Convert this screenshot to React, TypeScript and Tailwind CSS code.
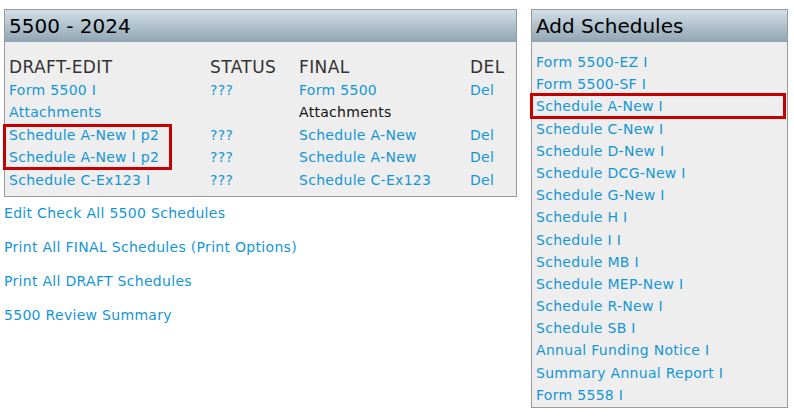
const font = "font-['DejaVu_Sans',Verdana,sans-serif]";

const rows = [
  { draft: "Form 5500 I", status: "???", final: "Form 5500", finalLink: true, del: "Del" },
  { draft: "Attachments", status: "", final: "Attachments", finalLink: false, del: "" },
  { draft: "Schedule A-New I p2", status: "???", final: "Schedule A-New", finalLink: true, del: "Del" },
  { draft: "Schedule A-New I p2", status: "???", final: "Schedule A-New", finalLink: true, del: "Del" },
  { draft: "Schedule C-Ex123 I", status: "???", final: "Schedule C-Ex123", finalLink: true, del: "Del" },
];

const schedules = [
  "Form 5500-EZ I",
  "Form 5500-SF I",
  "Schedule A-New I",
  "Schedule C-New I",
  "Schedule D-New I",
  "Schedule DCG-New I",
  "Schedule G-New I",
  "Schedule H I",
  "Schedule I I",
  "Schedule MB I",
  "Schedule MEP-New I",
  "Schedule R-New I",
  "Schedule SB I",
  "Annual Funding Notice I",
  "Summary Annual Report I",
  "Form 5558 I",
];

const actions = [
  "Edit Check All 5500 Schedules",
  "Print All FINAL Schedules (Print Options)",
  "Print All DRAFT Schedules",
  "5500 Review Summary",
];

const link = "text-[#1496d6] cursor-pointer";

function PanelHeader({ title }: { title: string }) {
  return (
    <div className="h-[32px] bg-gradient-to-b from-[#d3dfe7] to-[#8fa5b3] pl-[4px] text-[20px] tracking-normal leading-[32px] text-black">
      {title}
    </div>
  );
}

export default function App() {
  return (
    <div className={`${font} relative w-[794px] h-[416px] bg-white text-[14px] tracking-[0.3px]`}>
      <div className="flex pt-[9px] pl-[4px]">
        <div className="w-[513px]">
          <div className="border border-[#9a9a9a] bg-[#eeeeee]">
            <PanelHeader title="5500 - 2024" />
            <div className="pt-[13px] pb-[4px] pl-[4px]">
              <div className="grid grid-cols-[201px_89px_171px_auto] h-[24px] items-center text-[17px] tracking-[0.4px] text-[#333333]">
                <span>DRAFT-EDIT</span>
                <span>STATUS</span>
                <span>FINAL</span>
                <span>DEL</span>
              </div>
              {rows.map((r, i) => (
                <div key={i} className="grid grid-cols-[201px_89px_171px_auto] h-[22.5px] items-center">
                  <span className={link}>{r.draft}</span>
                  <span className={link}>{r.status}</span>
                  <span className={r.finalLink ? link : "text-[#111111]"}>{r.final}</span>
                  <span className={link}>{r.del}</span>
                </div>
              ))}
            </div>
          </div>
          <div className="flex flex-col -mt-[1px]">
            {actions.map((a) => (
              <div key={a} className={`h-[34px] leading-[34px] ${link}`}>
                {a}
              </div>
            ))}
          </div>
        </div>
        <div className="ml-[14px] w-[257px]">
          <div className="border border-[#9a9a9a] bg-[#eeeeee]">
            <PanelHeader title="Add Schedules" />
            <div className="pt-[9px] pb-[1px] pl-[4px]">
              {schedules.map((s) => (
                <div key={s} className={`h-[22.2px] leading-[22.2px] ${link}`}>
                  {s}
                </div>
              ))}
            </div>
          </div>
        </div>
      </div>
      {/* highlight boxes */}
      <div className="absolute left-[3px] top-[124px] w-[169px] h-[46px] border-[3px] border-[#c40000]" />
      <div className="absolute left-[530px] top-[93px] w-[256px] h-[26px] border-[3px] border-[#c40000]" />
    </div>
  );
}
